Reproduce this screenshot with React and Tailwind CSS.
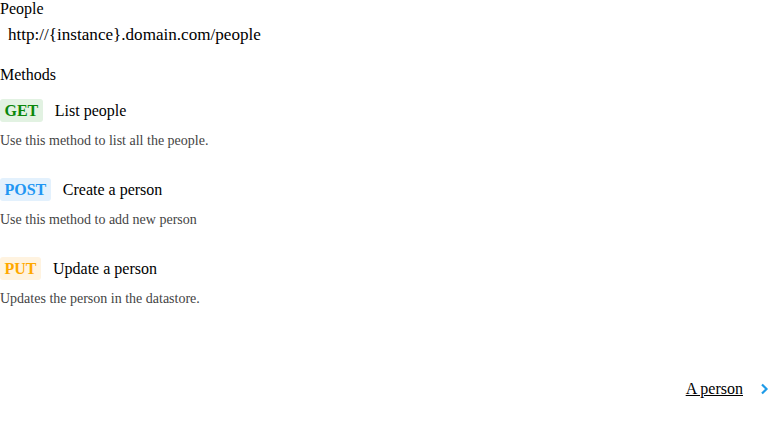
const methods = [
  {
    verb: "GET",
    title: "List people",
    desc: "Use this method to list all the people.",
    badge: "bg-[#e2f2e2] text-[#0a870a]",
  },
  {
    verb: "POST",
    title: "Create a person",
    desc: "Use this method to add new person",
    badge: "bg-[#e3f1fd] text-[#2196f3]",
  },
  {
    verb: "PUT",
    title: "Update a person",
    desc: "Updates the person in the datastore.",
    badge: "bg-[#fff3e0] text-[#ffa800]",
  },
];

function Method({ verb, title, desc, badge }) {
  return (
    <div className="mb-[29px]">
      <div className="flex items-center h-[23px]">
        <span className={`${badge} rounded-[3px] px-[4.5px] h-[23px] leading-[23px] text-[16px] font-bold`}>
          {verb}
        </span>
        <span className="ml-3 text-[16px] text-black">{title}</span>
      </div>
      <p className="mt-[11px] text-[14px] leading-[16px] text-[#444]">{desc}</p>
    </div>
  );
}

export default function App() {
  return (
    <div
      className="w-[784px] h-[441px] bg-white text-black"
      style={{ fontFamily: '"Liberation Serif", "Times New Roman", serif' }}
    >
      <h1 className="text-[16px] leading-[18px] font-normal">People</h1>
      <div className="mt-[8px] pl-2 text-[17.1px] leading-[18px]">
        http://{"{instance}"}.domain.com/people
      </div>
      <h2 className="mt-[22px] text-[16px] leading-[18px] font-normal">Methods</h2>
      <div className="mt-[15px]">
        {methods.map((m) => (
          <Method key={m.verb} {...m} />
        ))}
      </div>
      <div className="mt-[73px] flex items-center justify-end pr-[15px]">
        <a href="#" className="underline text-[16px] leading-[18px] text-black">
          A person
        </a>
        <svg
          className="ml-[16px]"
          width="10"
          height="14"
          viewBox="0 0 10 14"
          fill="none"
          stroke="#1e9be8"
          strokeWidth="2.2"
        >
          <path d="M3 2.5 L7.5 7 L3 11.5" />
        </svg>
      </div>
    </div>
  );
}
